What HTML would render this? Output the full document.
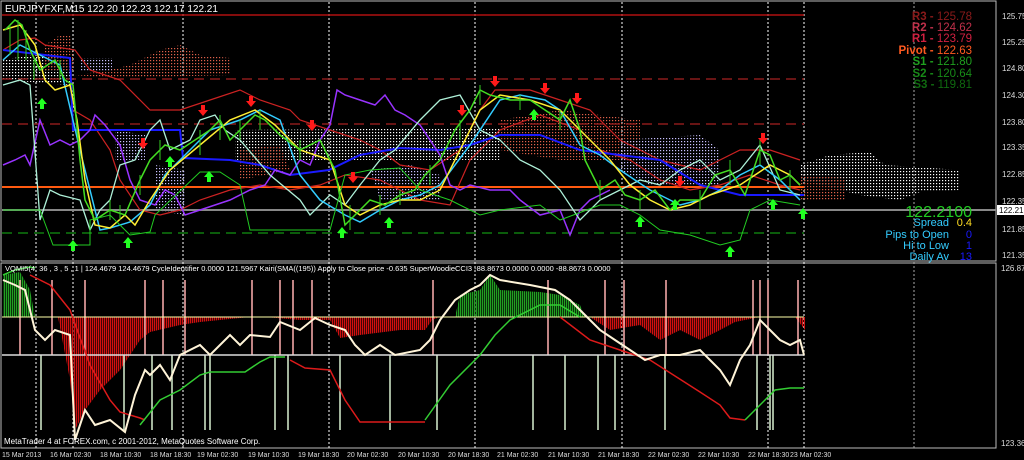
<!DOCTYPE html>
<html><head><meta charset="utf-8"><style>
html,body{margin:0;padding:0;background:#000;width:1024px;height:460px;overflow:hidden}
svg{display:block;font-family:"Liberation Sans",sans-serif}
</style></head><body>
<svg width="1024" height="460" viewBox="0 0 1024 460" xmlns="http://www.w3.org/2000/svg">
<defs>
<pattern id="pw" width="3" height="3" patternUnits="userSpaceOnUse"><rect width="1.2" height="1.2" fill="#fff"/></pattern>
<pattern id="pr" width="3" height="3" patternUnits="userSpaceOnUse"><rect width="1.2" height="1.2" fill="#e0604a"/></pattern>
<pattern id="pb" width="3" height="3" patternUnits="userSpaceOnUse"><rect width="1.2" height="1.2" fill="#c8c0ff"/></pattern>
<pattern id="sr" width="2" height="4" patternUnits="userSpaceOnUse"><rect width="1.3" height="4" fill="#d01010"/></pattern>
<pattern id="sg" width="2" height="4" patternUnits="userSpaceOnUse"><rect width="1.3" height="4" fill="#22a022"/></pattern>
<g id="up"><polygon points="0,-6 5,0 2,0 2,5 -2,5 -2,0 -5,0" fill="#22ff22"/></g>
<g id="dn"><polygon points="0,6 5,0 2,0 2,-5 -2,-5 -2,0 -5,0" fill="#ff1a1a"/></g>
</defs>
<rect width="1024" height="460" fill="#000"/>
<rect x="1" y="1" width="995" height="260" fill="none" stroke="#bbb" stroke-width="1"/>
<rect x="1" y="263" width="995" height="185" fill="none" stroke="#bbb" stroke-width="1"/>
<g stroke="#fff" stroke-width="1" stroke-dasharray="2,2">
<line x1="36" y1="2" x2="36" y2="448"/><line x1="73" y1="2" x2="73" y2="448"/><line x1="183" y1="2" x2="183" y2="448"/><line x1="329" y1="2" x2="329" y2="448"/><line x1="475" y1="2" x2="475" y2="448"/><line x1="622" y1="2" x2="622" y2="448"/><line x1="768" y1="2" x2="768" y2="448"/><line x1="804" y1="2" x2="804" y2="448"/>
<line x1="914" y1="2" x2="914" y2="448" stroke="#aaa"/>
</g>
<polygon points="3,60 30,55 70,58 70,85 3,80" fill="url(#pw)"/>
<polygon points="45,45 60,35 70,35 75,70 45,70" fill="url(#pr)"/>
<polygon points="80,58 112,58 112,72 80,72" fill="url(#pb)"/>
<polygon points="75,75 110,70 130,65 160,50 180,45 200,55 230,58 230,75 110,78" fill="url(#pr)"/>
<polygon points="235,130 500,128 500,160 235,160" fill="url(#pw)"/>
<polygon points="115,130 145,135 145,160 115,160" fill="url(#pb)"/>
<polygon points="155,165 185,170 185,215 155,210" fill="url(#pb)"/>
<polygon points="240,150 280,145 290,170 240,180" fill="url(#pr)"/>
<polygon points="500,120 560,110 640,120 640,160 560,160 500,150" fill="url(#pr)"/>
<polygon points="370,170 410,165 440,175 440,200 380,200" fill="url(#pb)"/>
<polygon points="620,140 700,135 720,150 720,185 650,185 620,170" fill="url(#pb)"/>
<polygon points="800,165 830,155 870,152 885,165 960,170 960,190 920,192 900,200 860,195 820,185 800,180" fill="url(#pw)"/>
<polygon points="800,175 845,178 845,200 800,200" fill="url(#pr)"/>
<line x1="2" y1="15" x2="804" y2="15" stroke="#b01010" stroke-width="1.5"/>
<line x1="2" y1="79" x2="804" y2="79" stroke="#8b1a1a" stroke-width="1.5" stroke-dasharray="10,6"/>
<line x1="2" y1="124" x2="804" y2="124" stroke="#8b1a1a" stroke-width="1.5" stroke-dasharray="10,6"/>
<line x1="2" y1="187" x2="804" y2="187" stroke="#ff5a10" stroke-width="2"/>
<line x1="2" y1="210" x2="996" y2="210" stroke="#888" stroke-width="2"/>
<line x1="2" y1="233" x2="804" y2="233" stroke="#0f7a0f" stroke-width="1.5" stroke-dasharray="10,6"/>
<polyline fill="none" stroke="#cc2222" stroke-width="1.2" points="3,50 20,40 35,38 45,45 75,50 90,70 120,80 150,110 180,110 210,100 240,90 260,100 290,110 300,120 330,130 345,135 360,140 380,150 400,165 430,170 460,150 480,110 495,90 530,90 560,100 590,110 620,140 660,160 700,170 740,150 770,150 800,160"/>
<polyline fill="none" stroke="#cc2222" stroke-width="1.2" points="73,110 90,120 110,150 120,180 140,210 160,215 180,210 200,200 230,190 260,185 290,190 320,185 345,175 380,180 420,200 450,205 470,160 500,130 540,115 580,130 600,150 630,160 660,180 690,190 720,185 750,175 780,185 800,190"/>
<polyline fill="none" stroke="#1a1aff" stroke-width="2" points="3,50 70,58 73,130 140,130 180,130 183,158 230,160 260,165 290,175 329,170 360,155 400,148 440,150 470,145 500,135 540,135 580,150 620,155 660,160 700,185 740,195 780,195 804,195"/>
<polyline fill="none" stroke="#9933ff" stroke-width="1.5" points="3,165 15,160 25,155 30,165 40,120 50,145 60,140 70,145 80,140 90,130 95,115 105,125 120,145 130,180 140,200 155,205 165,190 175,195 185,215 200,210 215,205 230,200 250,190 265,185 275,170 290,175 300,160 310,165 320,140 330,125 337,90 345,95 360,100 375,105 385,95 395,110 405,115 420,125 430,140 440,155 450,185 460,190 470,185 490,190 510,190 520,200 540,215 560,210 570,235 580,210 590,200 600,195 610,190"/>
<polyline fill="none" stroke="#aef0d8" stroke-width="1.3" points="3,85 20,80 30,85 40,220 50,190 60,195 80,200 90,230 100,210 110,200 120,165 135,160 150,130 160,120 170,150 190,140 200,120 215,115 225,130 240,140 270,175 300,200 310,215 330,195 345,205 360,185 380,160 395,150 420,120 440,100 460,95 480,130 500,140 520,160 540,170 560,190 580,220 600,200 620,190 640,180 660,185 680,170 700,160 720,180 740,170 760,145 780,190 800,195"/>
<polyline fill="none" stroke="#33ccff" stroke-width="1.5" points="3,60 20,45 40,55 60,65 80,150 100,230 110,228 130,222 150,205 165,175 180,160 210,130 240,120 260,110 280,120 300,175 320,200 345,215 360,222 380,210 400,200 420,195 440,185 470,145 500,100 520,95 545,100 560,110 580,145 600,155 620,170 650,190 680,205 700,200 720,190 740,175 760,165 780,180 800,200"/>
<polyline fill="none" stroke="#ffee33" stroke-width="1.5" points="3,30 20,25 35,45 45,80 55,90 70,85 77,120 85,180 95,225 110,228 125,215 135,225 150,200 170,170 200,145 230,120 255,110 275,125 300,150 330,160 345,205 360,215 380,205 400,200 420,200 440,190 460,150 480,110 500,95 530,100 560,110 590,140 610,160 630,185 650,200 670,210 690,205 710,195 740,185 770,165 790,175 800,185"/>
<polyline fill="none" stroke="#44dd22" stroke-width="1.5" points="5,30 15,20 22,25 30,50 40,70 55,60 65,80 73,85 80,160 85,200 95,220 110,210 125,215 140,180 150,160 165,145 180,150 195,140 210,130 220,120 230,140 245,125 255,115 265,120 280,135 300,150 320,140 335,170 345,225 355,215 370,200 385,205 400,195 415,190 425,175 440,160 455,130 470,110 480,90 490,95 510,100 530,100 545,110 560,120 570,100 580,130 585,160 600,190 615,180 625,195 640,200 655,190 670,210 680,200 700,200 715,175 730,170 745,195 760,150 770,155 780,180 790,175 800,185"/>
<g stroke="#33cc22" stroke-width="1">
<path d="M10 25v30M18 20v40M26 30v30M34 60v20M60 60v20M110 200v20M120 205v15M140 175v20M160 140v20M200 130v25M220 115v25M240 120v20M260 110v20M300 140v20M350 205v25M380 195v20M400 190v15M430 165v20M460 120v20M480 85v20M520 95v15M560 110v20M600 180v20M640 190v20M700 190v20M730 160v25M760 140v25M790 170v20"/>
</g>
<polyline fill="none" stroke="#22cc22" stroke-width="1" points="3,210 40,210 53,245 90,245 90,220 110,215 130,235 150,232 155,215 200,172 220,172 240,185 250,230 300,230 330,230 345,175 370,170 400,168 420,190 450,200 480,215 500,210 540,205 560,220 600,205 620,205 640,215 660,230 690,235 720,245 740,240 750,210 770,200 800,205"/>
<use href="#up" x="42" y="104"/><use href="#up" x="73" y="246"/><use href="#up" x="128" y="243"/><use href="#up" x="209" y="177"/><use href="#up" x="342" y="233"/><use href="#up" x="389" y="223"/><use href="#up" x="170" y="162"/><use href="#up" x="534" y="115"/><use href="#up" x="640" y="222"/><use href="#up" x="675" y="205"/><use href="#up" x="730" y="252"/><use href="#up" x="773" y="205"/><use href="#up" x="803" y="214"/>
<use href="#dn" x="203" y="110"/><use href="#dn" x="251" y="101"/><use href="#dn" x="143" y="143"/><use href="#dn" x="312" y="125"/><use href="#dn" x="495" y="81"/><use href="#dn" x="545" y="88"/><use href="#dn" x="577" y="98"/><use href="#dn" x="763" y="138"/><use href="#dn" x="680" y="181"/><use href="#dn" x="353" y="177"/><use href="#dn" x="462" y="110"/>
<text x="5" y="12" font-size="10" fill="#fff">EURJPYFXF,M15  122.20 122.23 122.17 122.21</text>
<g font-size="11.5" font-weight="bold" text-anchor="end">
<text x="972" y="20" fill="#8b1a1a">R3 - <tspan font-weight="normal">125.78</tspan></text>
<text x="972" y="31" fill="#c0304a">R2 - <tspan font-weight="normal">124.62</tspan></text>
<text x="972" y="42" fill="#d02040">R1 - <tspan font-weight="normal">123.79</tspan></text>
<text x="972" y="54" fill="#ff5a20">Pivot - <tspan font-weight="normal">122.63</tspan></text>
<text x="972" y="65" fill="#1fa01f">S1 - <tspan font-weight="normal">121.80</tspan></text>
<text x="972" y="77" fill="#178a17">S2 - <tspan font-weight="normal">120.64</tspan></text>
<text x="972" y="88" fill="#0f6a0f">S3 - <tspan font-weight="normal">119.81</tspan></text>
</g>
<text x="972" y="217" font-size="16" fill="#22cc22" text-anchor="end">122.2100</text>
<g font-size="11" text-anchor="end">
<text x="949" y="226" fill="#33ccff">Spread</text><text x="972" y="226" fill="#ffdd22">0.4</text>
<text x="949" y="238" fill="#33ccff">Pips to Open</text><text x="972" y="238" fill="#1a1aff">0</text>
<text x="949" y="249" fill="#33ccff">Hi to Low</text><text x="972" y="249" fill="#1a1aff">1</text>
<text x="949" y="260" fill="#33ccff">Daily Av</text><text x="972" y="260" fill="#1a1aff">13</text>
</g>
<g font-size="8" fill="#ddd">
<text x="1002" y="19">125.75</text><text x="1002" y="45">125.25</text><text x="1002" y="71">124.80</text><text x="1002" y="98">124.30</text><text x="1002" y="125">123.80</text><text x="1002" y="150">123.35</text><text x="1002" y="177">122.85</text><text x="1002" y="204">122.35</text><text x="1002" y="232">121.85</text><text x="1002" y="258">121.35</text>
<text x="1001" y="271">126.875</text><text x="1001" y="446">123.364</text>
</g>
<rect x="997" y="205" width="27" height="10" fill="#fff"/>
<text x="999" y="213" font-size="8" fill="#000">122.21</text>
<polygon fill="url(#sr)" points="58,317 70,380 75,430 85,410 100,390 120,370 140,340 150,332 180,325 200,322 240,318 250,317"/>
<polygon fill="url(#sr)" points="265,317 300,320 330,320 340,338 360,335 400,330 425,330 432,320 440,317"/>
<polygon fill="url(#sr)" points="590,317 610,330 640,325 660,340 680,330 700,340 720,330 735,322 760,317 795,317 805,330 805,317"/>
<polygon fill="url(#sg)" points="3,317 3,275 20,272 30,290 35,317"/>
<polygon fill="url(#sg)" points="455,317 460,295 480,290 490,275 500,290 540,292 560,295 580,305 585,317"/>
<g stroke="#ffb0b0" stroke-width="1.5">
<path d="M20 280v75M52 280v75M85 280v75M145 280v75M163 280v75M185 280v75M252 280v75M280 280v75M293 280v75M312 280v75M433 280v75M548 280v75M605 280v75M624 280v75M666 280v75M753 280v75M760 280v75M768 280v75M798 280v75"/>
</g>
<g stroke="#d8f0d0" stroke-width="1.5">
<path d="M41 355v75M124 355v75M152 355v75M172 355v75M205 355v75M210 355v75M275 355v75M288 355v75M340 355v75M390 355v75M437 355v75M533 355v75M565 355v75M598 355v75M615 355v75M665 355v75M757 355v75M770 355v75M773 355v75"/>
</g>
<line x1="2" y1="317" x2="804" y2="317" stroke="#ffffaa" stroke-width="1"/>
<line x1="2" y1="355" x2="804" y2="355" stroke="#ddd" stroke-width="1.5"/>
<polyline fill="none" stroke="#dd1a1a" stroke-width="1.5" points="30,275 50,285 70,310 90,365 110,400 120,412 140,418 145,420"/>
<polyline fill="none" stroke="#dd1a1a" stroke-width="1.5" points="290,360 305,368 330,370 345,400 360,422 425,422"/>
<polyline fill="none" stroke="#dd1a1a" stroke-width="1.5" points="560,317 590,340 620,350 650,360 700,392 720,405 730,418 745,420"/>
<polyline fill="none" stroke="#33cc33" stroke-width="1.5" points="3,275 15,270 30,267 35,268"/>
<polyline fill="none" stroke="#33cc33" stroke-width="1.5" points="140,425 160,400 180,390 200,375 210,372 245,372 260,362 270,357 285,357"/>
<polyline fill="none" stroke="#33cc33" stroke-width="1.5" points="425,420 450,385 480,355 495,335 510,320 540,305 560,305 580,317"/>
<polyline fill="none" stroke="#33cc33" stroke-width="1.5" points="745,420 775,390 790,388 804,388"/>
<polyline fill="none" stroke="#fff4d8" stroke-width="2" points="3,280 15,285 25,290 35,330 45,340 55,330 70,335 75,440 85,410 95,425 110,420 125,432 135,395 145,370 150,375 160,365 170,380 180,355 200,345 210,355 220,345 230,335 240,345 250,335 270,337 280,322 300,330 315,318 330,325 345,330 355,345 365,355 380,345 395,355 420,350 430,340 440,320 455,300 470,290 480,285 490,275 500,280 530,285 555,290 570,300 580,310 590,320 600,330 615,340 630,350 645,360 660,355 680,355 700,350 710,360 720,370 730,385 740,360 750,345 760,320 770,330 780,340 790,345 800,340 804,355"/>
<text x="5" y="271" font-size="7.5" fill="#fff">VQMI5(4, 36 , 3 , 5 , 1  |  124.4679 124.4679  CycleIdentifier 0.0000 121.5967  Kairi(SMA((195)) Apply to Close price -0.635  SuperWoodieCCI3 -88.8673 0.0000 0.0000 -88.8673 0.0000</text>
<text x="4" y="444" font-size="8" fill="#fff">MetaTrader 4 at FOREX.com, c 2001-2012, MetaQuotes Software Corp.</text>
<g font-size="7" fill="#ddd">
<text x="2" y="457">15 Mar 2013</text><text x="50" y="457">16 Mar 02:30</text><text x="100" y="457">18 Mar 10:30</text><text x="150" y="457">18 Mar 18:30</text><text x="197" y="457">19 Mar 02:30</text><text x="248" y="457">19 Mar 10:30</text><text x="298" y="457">19 Mar 18:30</text><text x="347" y="457">20 Mar 02:30</text><text x="398" y="457">20 Mar 10:30</text><text x="448" y="457">20 Mar 18:30</text><text x="497" y="457">21 Mar 02:30</text><text x="548" y="457">21 Mar 10:30</text><text x="598" y="457">21 Mar 18:30</text><text x="648" y="457">22 Mar 02:30</text><text x="698" y="457">22 Mar 10:30</text><text x="748" y="457">22 Mar 18:30</text><text x="790" y="457">23 Mar 02:30</text>
</g>
</svg>
</body></html>
